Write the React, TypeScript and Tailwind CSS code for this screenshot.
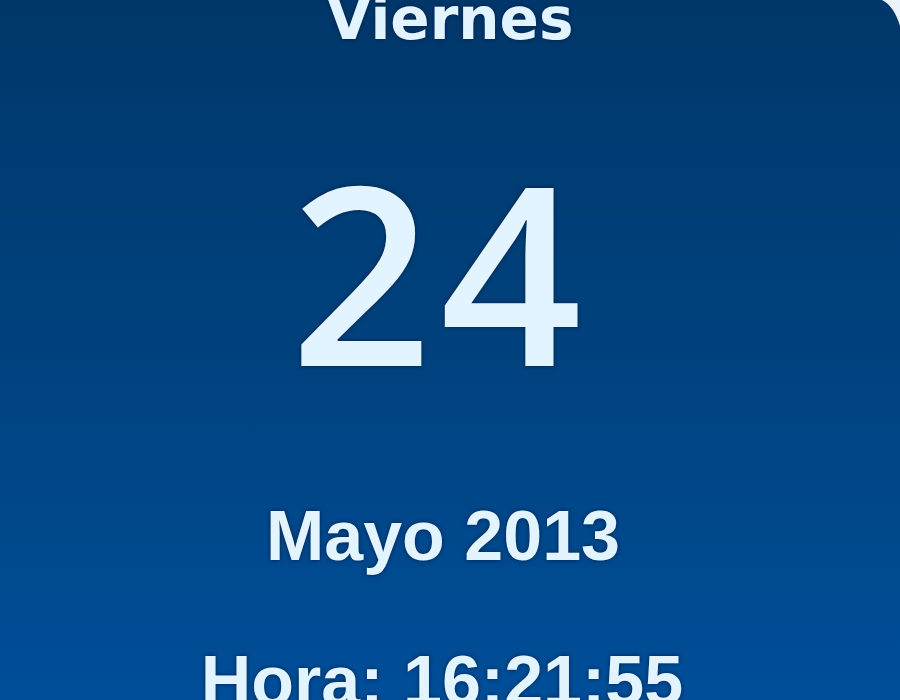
import React from "react";

export default function App() {
  return (
    <div className="relative h-[700px] w-[900px] overflow-hidden bg-gradient-to-b from-[#00376a] via-[#00427e] to-[#004e99] text-[#e2f4ff] [text-shadow:0_0_4px_rgba(0,25,60,0.85)]">
      <svg className="absolute right-0 top-0" width="24" height="30" viewBox="0 0 24 30">
        <path d="M6 0 Q18 6 24 26 L24 0 Z" fill="#eaf4fb" />
      </svg>
      <div className="flex flex-col items-center">
        <div className="-mt-[10px] h-[58px] font-['DejaVu_Sans',sans-serif] text-[58px] font-bold leading-[58px]">
          Viernes
        </div>
        <div className="mt-[98px] h-[248px] pr-[20px] font-['Open_Sans',sans-serif] text-[248px] font-semibold leading-[248px] tracking-[8px]">
          24
        </div>
        <div className="mt-[107px] h-[70px] pr-[14px] font-['Liberation_Sans',sans-serif] text-[70px] font-bold leading-[70px]">
          Mayo 2013
        </div>
        <div className="mt-[75px] h-[70px] pr-[16px] font-['Liberation_Sans',sans-serif] text-[70px] font-bold leading-[70px]">
          Hora: 16:21:55
        </div>
      </div>
    </div>
  );
}
